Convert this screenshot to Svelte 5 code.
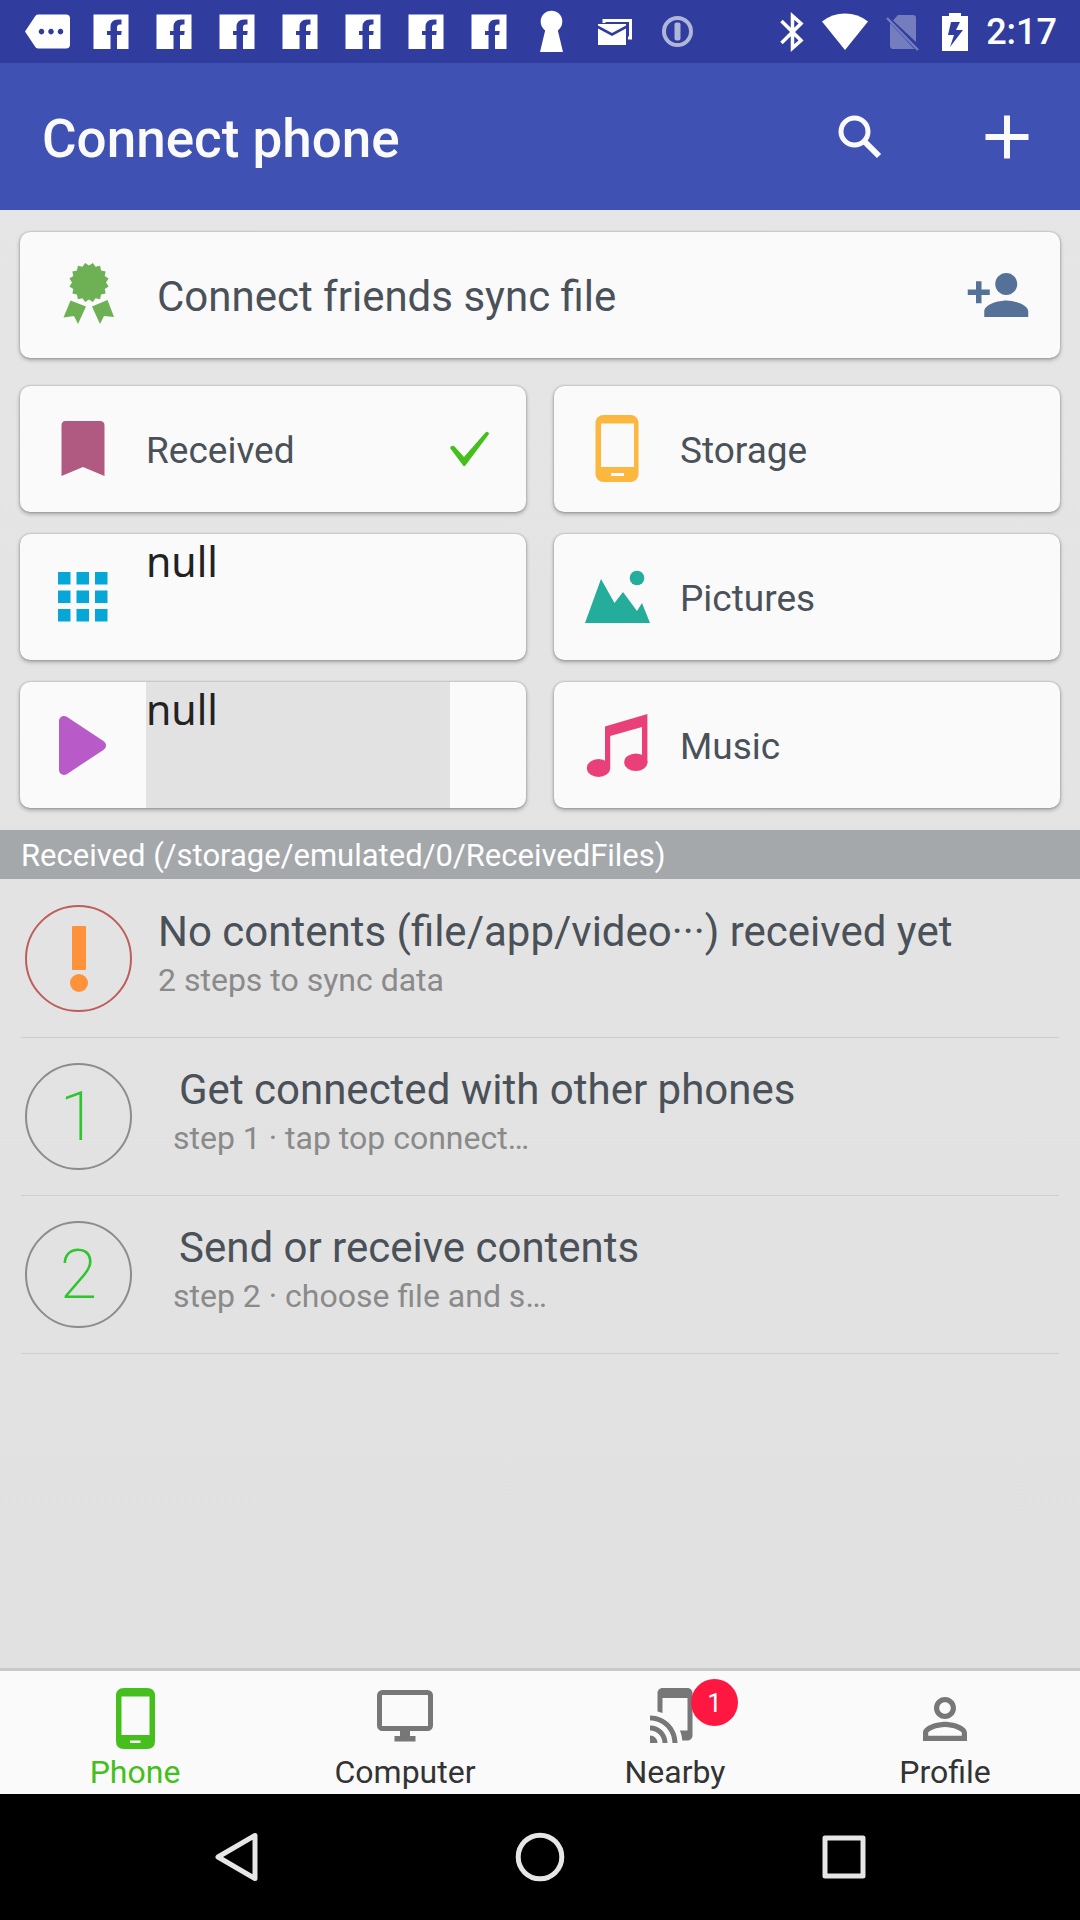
<script>
  const facebookNotices = [1, 2, 3, 4, 5, 6, 7];

  const tiles = [
    { id: 'received', label: 'Received', checked: true },
    { id: 'storage', label: 'Storage' },
    { id: 'apps', label: 'null', untitled: true },
    { id: 'pictures', label: 'Pictures' },
    { id: 'videos', label: 'null', untitled: true, shaded: true },
    { id: 'music', label: 'Music' },
  ];

  const steps = [
    { mark: '!', title: 'No contents (file/app/video···) received yet', note: '2 steps to sync data' },
    { mark: '1', title: 'Get connected with other phones', note: 'step 1 · tap top connect…' },
    { mark: '2', title: 'Send or receive contents', note: 'step 2 · choose file and s…' },
  ];

  const tabs = [
    { id: 'phone', label: 'Phone' },
    { id: 'computer', label: 'Computer' },
    { id: 'nearby', label: 'Nearby', badge: 1 },
    { id: 'profile', label: 'Profile' },
  ];

  let active = $state('phone');

  // Scalloped edge of the rosette
  const teeth = 16;
  const rosette = Array.from({ length: teeth * 2 }, (_, i) => {
    const r = i % 2 ? 20 : 17;
    const a = (Math.PI * i) / teeth;
    return `${(36 + r * Math.sin(a)).toFixed(2)},${(23.5 - r * Math.cos(a)).toFixed(2)}`;
  }).join(' ');
</script>

<div class="screen">
  <div class="status">
    <div class="notices">
      <svg viewBox="0 0 63 63"><path fill="#fff" fill-rule="evenodd" d="M22 14.5h28a4 4 0 0 1 4 4v26a4 4 0 0 1-4 4H22q-2 0-3-2L9 31.500l10-15q1-2 3-2zM25.500 28.800a2.800 2.800 0 1 0 .01 0zm9.500 0a2.800 2.800 0 1 0 .01 0zm9.500 0a2.800 2.800 0 1 0 .01 0z" /></svg>
      {#each facebookNotices as n (n)}
        <svg viewBox="0 0 63 63"><path fill="#fff" d="M14.500 14.500h35V49H38V35h4.200l.5-4H38v-3.500q0-3 3-3h1.500v-5H39q-7.500 0-7.500 7.500v4H28v4h3.500v14h-17z" /></svg>
      {/each}
      <svg viewBox="0 0 63 63"><circle cx="31.500" cy="21.500" r="10.800" fill="#fff" /><path fill="#fff" d="M26 27h11l6 25H20z" /></svg>
      <svg viewBox="0 0 63 63"><path fill="none" stroke="#fff" stroke-width="3" d="M21 23v-2.500h26.500V38H45" /><path fill="#fff" d="M15 24h28v1.500L29 33l-14-7.500zM15 28.500l14 7.500 14-7.500V45H15z" /></svg>
      <svg viewBox="0 0 63 63" opacity=".62"><circle cx="31.500" cy="31.500" r="13.500" fill="none" stroke="#fff" stroke-width="4" /><rect x="28.500" y="22.500" width="6" height="18" rx="2" fill="#fff" /></svg>
    </div>
    <div class="system">
      <svg width="24" height="40" viewBox="0 0 24 40"><path fill="none" stroke="#fff" stroke-width="3.500" d="M1.500 9 21 28.500 12.500 36V4L21 11.500 1.500 31" /></svg>
      <svg width="46" height="40" viewBox="0 0 46 40"><path fill="#fff" d="M0 9.500Q10 1.500 23 1.500t23 8L23 38z" /></svg>
      <svg width="38" height="40" viewBox="0 0 38 40"><g opacity=".33"><path fill="#fff" d="M12 3h15q3 0 3 3v24L7 8.500zM4 11l24.500 26H7q-3 0-3-3z" /><path stroke="#fff" stroke-width="2.500" d="M1 6l31 32" /></g></svg>
      <svg width="26" height="40" viewBox="0 0 26 40"><path fill="#fff" fill-rule="evenodd" d="M7 1h12v3h7v35H0V4h7zM9 10 6 23h6L8 35l13-17h-7l4-8z" /></svg>
      <span>2:17</span>
    </div>
  </div>

  <header>
    <h1>Connect phone</h1>
    <button aria-label="Search">
      <svg width="44" height="44" viewBox="0 0 44 44" fill="none" stroke="#fafafa"><circle cx="16.500" cy="16.500" r="13.500" stroke-width="5" /><path stroke-width="6" d="M26.500 26.500 41 41" /></svg>
    </button>
    <button aria-label="Add">
      <svg width="44" height="44" viewBox="0 0 44 44" stroke="#fafafa" stroke-width="6"><path d="M22 .5v43M.5 22h43" /></svg>
    </button>
  </header>

  <main>
    <section class="cards">
      <button class="card invite">
        <span class="icon">
          <svg width="72" height="72" viewBox="0 0 72 72" fill="#6db154"><polygon points={rosette} /><path d="M17.500 41.500 33 47.500 25 65l-4-8-10.500 1.500zM54.500 41 39 47.500 47 65l4-8 10 1z" /></svg>
        </span>
        <span class="label">Connect friends sync file</span>
        <svg class="person" width="66" height="66" viewBox="0 0 24 24" fill="#557197"><path d="M15 12c2.210 0 4-1.790 4-4s-1.790-4-4-4-4 1.790-4 4 1.790 4 4 4zm-9-2V7H4v3H1v2h3v3h2v-3h3v-2H6zm9 4c-2.670 0-8 1.340-8 4v2h16v-2c0-2.660-5.330-4-8-4z" /></svg>
      </button>

      <div class="grid">
        {#each tiles as tile (tile.id)}
          <button class="card">
            <span class="icon">
              <svg width="72" height="72" viewBox="0 0 72 72">
                {#if tile.id === 'received'}
                  <path fill="#b05981" d="M18.500 8h34.500q4.500 0 4.500 4.500V63L36 54 14.500 63V12.500q0-4.500 4-4.500z" />
                {:else if tile.id === 'storage'}
                  <rect x="14.500" y="2" width="43" height="67" rx="8" fill="#fcb73e" /><path fill="#fafafa" d="M20 10.500h33V54H20zM30 60h13v3H30z" />
                {:else if tile.id === 'apps'}
                  {#each [11, 29.5, 48] as y}
                    {#each [11, 29.5, 48] as x}
                      <rect {x} {y} width="12.500" height="12.500" fill="#06a6d6" />
                    {/each}
                  {/each}
                {:else if tile.id === 'pictures'}
                  <path fill="#25ad9c" d="M4 62 20 18l13.500 24L42 31l14 19 5-8 8 20z" /><circle cx="56" cy="17" r="7.300" fill="#25ad9c" />
                {:else if tile.id === 'videos'}
                  <path fill="#b85bc9" stroke="#b85bc9" stroke-width="10" stroke-linejoin="round" d="M17 12v49l37-24.500z" />
                {:else}
                  <g fill="#ea4079"><ellipse cx="17.500" cy="59" rx="11.700" ry="9" /><ellipse cx="54.800" cy="53.200" rx="11.600" ry="8.800" /><path d="M24 17.500 66.400 5v49H61V18l-31.800 9v32H24z" /></g>
                {/if}
              </svg>
            </span>
            <span class="label" class:untitled={tile.untitled} class:shaded={tile.shaded}>{tile.label}</span>
            <span class="end">
              {#if tile.checked}
                <svg width="40" height="36" viewBox="0 0 40 36"><path fill="#44bf1b" d="M0 17q2-4 5-1l9 10L35 2q3-3 4 1L15 35h-1.500z" /></svg>
              {/if}
            </span>
          </button>
        {/each}
      </div>
    </section>

    <h2>Received (/storage/emulated/0/ReceivedFiles)</h2>

    <ul>
      {#each steps as step (step.mark)}
        <li class:warning={step.mark === '!'}>
          <span class="mark">
            {#if step.mark === '!'}
              <svg width="20" height="68" viewBox="0 0 20 68" fill="#fe923a"><rect x="3" y="1" width="14" height="44" rx="1" /><circle cx="10" cy="58" r="9" /></svg>
            {:else}
              {step.mark}
            {/if}
          </span>
          <div class="texts">
            <h3>{step.title}</h3>
            <p>{step.note}</p>
          </div>
        </li>
      {/each}
    </ul>
  </main>

  <nav class="tabs">
    {#each tabs as tab (tab.id)}
      <button class:active={active === tab.id} onclick={() => (active = tab.id)}>
        <span class="tabicon">
          {#if tab.id === 'phone'}
            <svg width="60" height="64" viewBox="0 0 60 64"><path fill="currentColor" fill-rule="evenodd" d="M19 3h23q8 0 8 8v45q0 8-8 8H19q-8 0-8-8V11q0-8 8-8zm-2.500 8.500V50h28V11.500zM25 55.500V58h10.500v-2.500z" /></svg>
          {:else if tab.id === 'computer'}
            <svg width="60" height="64" viewBox="0 0 60 64"><rect x="4.500" y="7.500" width="51" height="36" rx="3" fill="none" stroke="currentColor" stroke-width="5" /><path fill="currentColor" d="M25 45h10v6h5.500v5.500h-21V51H25z" /></svg>
          {:else if tab.id === 'nearby'}
            <svg width="60" height="64" viewBox="0 -0.200 24 25.600"><path fill="currentColor" d="M2 16v2c2.760 0 5 2.240 5 5h2c0-3.870-3.130-7-7-7zm0 4v3h3c0-1.660-1.340-3-3-3zm0-8v2c4.970 0 9 4.030 9 9h2c0-6.080-4.920-11-11-11zM17 1.010L7 1c-1.100 0-2 .9-2 2v7.370c.69.16 1.360.37 2 .64V5h10v13h-3.030c.52 1.250.84 2.590.95 4H17c1.100 0 2-.9 2-2V3c0-1.100-.9-1.990-2-1.990z" /></svg>
          {:else}
            <svg width="60" height="64" viewBox="1.090 -0.360 21.820 23.270"><path fill="currentColor" d="M12 5.900c1.160 0 2.100.94 2.100 2.100s-.94 2.100-2.100 2.100S9.900 9.160 9.900 8s.94-2.100 2.100-2.100m0 9c2.970 0 6.100 1.460 6.100 2.100v1.100H5.900V17c0-.64 3.130-2.100 6.100-2.100M12 4C9.790 4 8 5.790 8 8s1.790 4 4 4 4-1.790 4-4-1.790-4-4-4zm0 9c-2.670 0-8 1.340-8 4v3h16v-3c0-2.660-5.330-4-8-4z" /></svg>
          {/if}
          {#if tab.badge}<span class="badge">{tab.badge}</span>{/if}
        </span>
        <span>{tab.label}</span>
      </button>
    {/each}
  </nav>

  <nav class="system-nav">
    <button aria-label="Back"><svg width="50" height="50" viewBox="0 0 50 50"><path d="M44 3.500v43L7 25z" /></svg></button>
    <button aria-label="Home"><svg width="50" height="50" viewBox="0 0 50 50"><circle cx="25" cy="25" r="21.800" /></svg></button>
    <button aria-label="Recent apps"><svg width="50" height="50" viewBox="0 0 50 50"><rect x="6" y="6" width="38" height="38" /></svg></button>
  </nav>
</div>

<style>
  :global(body) {
    margin: 0;
  }

  .screen {
    display: flex;
    flex-direction: column;
    min-height: 100vh;
    font-family: Roboto, 'Noto Sans', sans-serif;
    color: #4a5158;
    background: linear-gradient(#e6e6e6, #e0e0e0);
  }

  svg {
    display: block;
    flex: none;
  }

  button {
    margin: 0;
    padding: 0;
    border: 0;
    background: none;
    font: inherit;
    color: inherit;
    cursor: pointer;
  }

  h1,
  h2,
  h3,
  p,
  ul {
    margin: 0;
    padding: 0;
    font-weight: 400;
  }

  .status {
    display: flex;
    justify-content: space-between;
    height: 63px;
    padding: 0 23px 0 16px;
    background: #303d9e;
    color: #fff;
  }

  .notices,
  .system {
    display: flex;
    align-items: center;
  }

  .notices svg {
    width: 63px;
    height: 63px;
  }

  .system {
    gap: 18px;
    font-size: 36px;
    font-weight: 500;
    line-height: 68px;
  }

  header {
    display: flex;
    align-items: center;
    height: 147px;
    padding-left: 42px;
    background: #3f51b3;
    color: #fafafa;
  }

  h1 {
    flex: 1;
    padding-top: 4px;
    font-size: 53px;
    font-weight: 500;
    line-height: 64px;
  }

  header button {
    display: grid;
    place-items: center;
    width: 147px;
    height: 147px;
  }

  main {
    flex: 1;
  }

  .cards {
    display: flex;
    flex-direction: column;
    gap: 28px;
    padding: 22px 20px;
  }

  .grid {
    display: grid;
    grid-template-columns: 1fr 1fr;
    gap: 22px 28px;
  }

  .card {
    display: flex;
    align-items: center;
    height: 126px;
    border-radius: 10px;
    background: #fafafa;
    box-shadow: 0 0 2px rgba(0, 0, 0, 0.3), 0 2px 4px rgba(0, 0, 0, 0.3);
    font-size: 37px;
    line-height: 48px;
    text-align: left;
  }

  .icon {
    display: grid;
    place-items: center;
    flex: none;
    width: 126px;
  }

  .label {
    flex: 1;
    padding-top: 4px;
  }

  .untitled {
    align-self: stretch;
    padding-top: 0;
    font-family: 'Noto Sans', sans-serif;
    font-size: 41px;
    line-height: 54px;
    color: #222;
  }

  .shaded {
    background: #e2e2e2;
  }

  .end {
    flex: none;
    width: 76px;
  }

  .invite {
    padding-right: 29px;
    font-size: 42px;
  }

  .invite .icon {
    width: 137px;
  }

  h2 {
    padding: 2px 21px 0;
    background: #a4a8ab;
    color: #fff;
    font-size: 31px;
    line-height: 47px;
  }

  ul {
    padding: 1px 21px 0;
    list-style: none;
  }

  li {
    display: flex;
    align-items: center;
    gap: 26px;
    height: 157px;
    padding-left: 4px;
    border-bottom: 1px solid #cfcfcf;
  }

  .mark {
    display: grid;
    place-items: center;
    flex: none;
    box-sizing: border-box;
    width: 107px;
    height: 107px;
    border: 2px solid #8c8c8c;
    border-radius: 50%;
    color: #2fc52f;
    font-size: 68px;
    font-weight: 200;
    line-height: 102px;
  }

  .warning .mark {
    border-color: #bf5d5b;
  }

  h3 {
    padding-left: 21px;
    font-size: 42px;
    line-height: 54px;
  }

  p {
    padding-left: 15px;
    font-size: 32px;
    line-height: 42px;
    color: #8a8a8a;
  }

  .texts {
    align-self: flex-start;
    padding-top: 25px;
  }

  .warning h3,
  .warning p {
    padding-left: 0;
  }

  .tabs {
    display: flex;
    padding: 14px 0 3px;
    border-top: 3px solid #c9c9c9;
    background: #fafafa;
  }

  .tabs button {
    display: flex;
    flex: 1;
    flex-direction: column;
    align-items: center;
    gap: 4px;
    font-size: 32px;
    line-height: 38px;
    color: #333;
  }

  .tabicon {
    position: relative;
    color: #777;
  }

  .tabs .active,
  .active .tabicon {
    color: #44bf1b;
  }

  .badge {
    position: absolute;
    top: -6px;
    right: -33px;
    width: 47px;
    height: 47px;
    border-radius: 50%;
    background: #fe1741;
    color: #fff;
    font-size: 26px;
    line-height: 48px;
    text-align: center;
  }

  .system-nav {
    display: flex;
    height: 126px;
    padding: 0 84px;
    background: #000;
  }

  .system-nav button {
    display: grid;
    place-items: center;
    flex: 1;
  }

  .system-nav svg {
    fill: none;
    stroke: #e6e6e6;
    stroke-width: 5;
    stroke-linejoin: round;
  }
</style>
